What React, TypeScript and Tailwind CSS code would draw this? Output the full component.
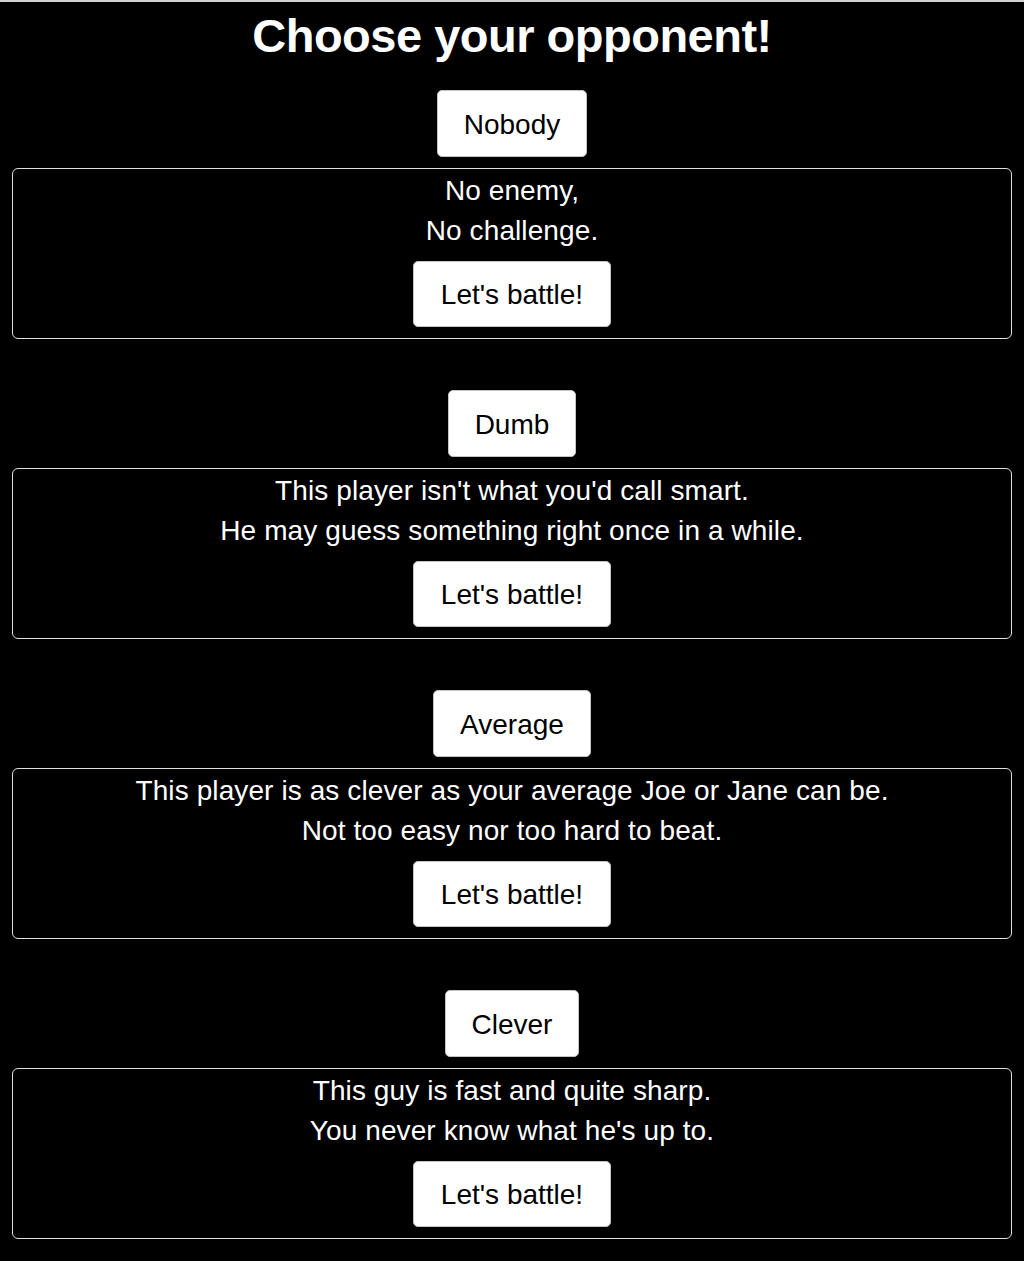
import React from "react";

const opponents = [
  { name: "Nobody", lines: ["No enemy,", "No challenge."] },
  {
    name: "Dumb",
    lines: ["This player isn't what you'd call smart.", "He may guess something right once in a while."],
  },
  {
    name: "Average",
    lines: ["This player is as clever as your average Joe or Jane can be.", "Not too easy nor too hard to beat."],
  },
  { name: "Clever", lines: ["This guy is fast and quite sharp.", "You never know what he's up to."] },
];

export default function App() {
  return (
    <div className="min-h-[1261px] bg-black border-t-2 border-[#d2d2d2] text-white font-['Liberation_Sans',Arial,sans-serif]">
      <h1 className="pt-[6px] text-center text-[47px] leading-[56px] font-bold tracking-[-0.5px]">
        Choose your opponent!
      </h1>
      <div className="mt-[26px] flex flex-col gap-[51px]">
        {opponents.map((o) => (
          <section key={o.name} className="flex flex-col items-center">
            <button className="h-[67px] pt-[2px] px-[26px] bg-white text-black text-[28px] border border-[#c4c4c4] rounded-[5px]">
              {o.name}
            </button>
            <div className="mt-[11px] mx-[12px] self-stretch h-[171px] border border-[#dedede] rounded-[6px] flex flex-col items-center pt-[2px] pb-[11px]">
              {o.lines.map((l) => (
                <p key={l} className="text-[28px] leading-[40px] text-center tracking-[0.1px]">
                  {l}
                </p>
              ))}
              <button className="mt-[10px] h-[66px] pt-[1px] px-[27px] bg-white text-black text-[28px] border border-[#c4c4c4] rounded-[5px]">
                Let's battle!
              </button>
            </div>
          </section>
        ))}
      </div>
    </div>
  );
}
